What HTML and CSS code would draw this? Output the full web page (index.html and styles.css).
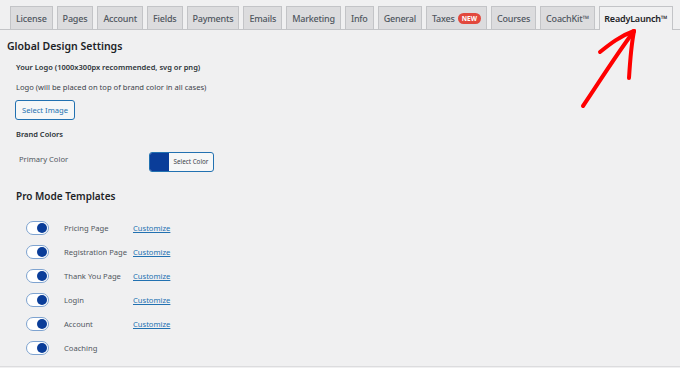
FILE: index.html
```html
<!DOCTYPE html>
<html lang="en">
<head>
    <meta charset="UTF-8">
    <meta name="viewport" content="width=device-width, initial-scale=1.0">
    <title>ReadyLaunch Settings</title>
    <link rel="stylesheet" href="styles.css">
</head>
<body>
    <div class="page">
        <nav class="tabs">
            <a class="tab">License</a>
            <a class="tab">Pages</a>
            <a class="tab">Account</a>
            <a class="tab">Fields</a>
            <a class="tab">Payments</a>
            <a class="tab">Emails</a>
            <a class="tab">Marketing</a>
            <a class="tab">Info</a>
            <a class="tab">General</a>
            <a class="tab">Taxes <span class="badge">NEW</span></a>
            <a class="tab">Courses</a>
            <a class="tab">CoachKit™</a>
            <a class="tab active">ReadyLaunch™</a>
        </nav>

        <div class="content">
            <h2 class="title">Global Design Settings</h2>
            <div class="section">
                <p class="label-strong logo-label">Your Logo (1000x300px recommended, svg or png)</p>
                <p class="help">Logo (will be placed on top of brand color in all cases)</p>
                <button class="btn">Select Image</button>
                <p class="label-strong brand-label">Brand Colors</p>
                <div class="color-row">
                    <span class="color-name">Primary Color</span>
                    <div class="picker">
                        <span class="swatch"></span>
                        <span class="picker-text">Select Color</span>
                    </div>
                </div>
            </div>

            <h3 class="subtitle">Pro Mode Templates</h3>
            <div class="templates">
                <div class="tpl-row"><span class="toggle"></span><span class="tpl-name">Pricing Page</span><a class="link">Customize</a></div>
                <div class="tpl-row"><span class="toggle"></span><span class="tpl-name">Registration Page</span><a class="link">Customize</a></div>
                <div class="tpl-row"><span class="toggle"></span><span class="tpl-name">Thank You Page</span><a class="link">Customize</a></div>
                <div class="tpl-row"><span class="toggle"></span><span class="tpl-name">Login</span><a class="link">Customize</a></div>
                <div class="tpl-row"><span class="toggle"></span><span class="tpl-name">Account</span><a class="link">Customize</a></div>
                <div class="tpl-row"><span class="toggle"></span><span class="tpl-name">Coaching</span></div>
            </div>
        </div>

        <!-- hand drawn arrow pointing at the active tab -->
        <svg class="arrow" width="80" height="100" viewBox="560 20 80 100">
            <path d="M583 106 C598 84 614 58 634 31" fill="none" stroke="#f00" stroke-width="4" stroke-linecap="round"/>
            <path d="M600 52 C610 44 620 36 634 31" fill="none" stroke="#f00" stroke-width="4" stroke-linecap="round"/>
            <path d="M634 31 C631 46 630 62 629 78" fill="none" stroke="#f00" stroke-width="4" stroke-linecap="round"/>
        </svg>
    </div>
</body>
</html>
```

FILE: styles.css
```css
body { margin: 0; background: #f0f0f1; font-family: "Noto Sans", "Open Sans", sans-serif; color: #3c434a; }
.page { position: relative; height: 366px; overflow: hidden; border-bottom: 1px solid #dcdcde; }
p { margin: 0; }

/* Tabs */
.tabs { display: flex; gap: 4px; padding: 6px 0 0 10px; border-bottom: 1px solid #c3c4c7; height: 23px; }
.tab {
    display: flex;
    flex: none;
    align-items: center;
    height: 22px;
    padding: 0 5px;
    background: #dcdcde;
    border: 1px solid #c3c4c7;
    border-bottom: none;
    font-size: 9px;
    font-weight: 500;
    color: #50575e;
    letter-spacing: -0.2px;
}
.tab.active { background: #f0f0f1; color: #1d2327; font-weight: 600; height: 23px; margin-bottom: -1px; padding: 0 4px; }
.badge {
    display: inline-block;
    margin-left: 3px;
    padding: 0 4px;
    background: #e2483d;
    color: #fff;
    border-radius: 8px;
    font-size: 6.5px;
    font-weight: 700;
    line-height: 11px;
    letter-spacing: 0;
}

/* Content */
.content { padding: 0 0 0 7px; }
.title { margin: 8px 0 0; font-size: 10.5px; font-weight: 600; line-height: 17px; color: #1d2327; }
.section { padding-left: 9px; }
.label-strong { font-size: 7.5px; font-weight: 600; color: #2c3338; line-height: 14px; }
.logo-label { margin-top: 5px; }
.help { margin-top: 6px; font-size: 7.6px; line-height: 14px; color: #3c434a; }
.btn {
    display: block;
    margin: 6px 0 0 -1px;
    height: 20px;
    width: 60px;
    padding: 0;
    background: #f6f7f7;
    border: 1px solid #2271b1;
    border-radius: 3px;
    color: #2271b1;
    font-family: inherit;
    font-size: 7.6px;
}
.brand-label { margin-top: 7px; }
.color-row { display: flex; align-items: center; margin-top: 11px; }
.color-name { width: 130px; padding-left: 3px; font-size: 7.6px; color: #50575e; margin-top: -7px; }
.picker { display: flex; height: 18px; border: 1px solid #2271b1; border-radius: 3px; overflow: hidden; background: #f6f7f7; }
.swatch { width: 19px; background: #0a3d99; }
.picker-text { width: 44px; font-size: 6.3px; line-height: 18px; text-align: center; color: #3c434a; }

.subtitle { margin: 15px 0 0 9px; font-size: 10px; font-weight: 600; line-height: 18px; color: #1d2327; }
.templates { margin-top: 11px; padding-left: 19px; }
.tpl-row { display: flex; align-items: center; height: 24px; }
.toggle {
    position: relative;
    width: 21px;
    height: 12px;
    border: 1px solid #7ea3d0;
    border-radius: 8px;
    background: #fff;
}
.toggle::after {
    content: "";
    position: absolute;
    right: 1px;
    top: 1px;
    width: 10px;
    height: 10px;
    border-radius: 50%;
    background: #0a3d99;
}
.tpl-name { width: 69px; margin-left: 15px; font-size: 7.6px; color: #50575e; }
.link { font-size: 7.6px; color: #2271b1; text-decoration: underline; }

.arrow { position: absolute; left: 560px; top: 20px; }
```
